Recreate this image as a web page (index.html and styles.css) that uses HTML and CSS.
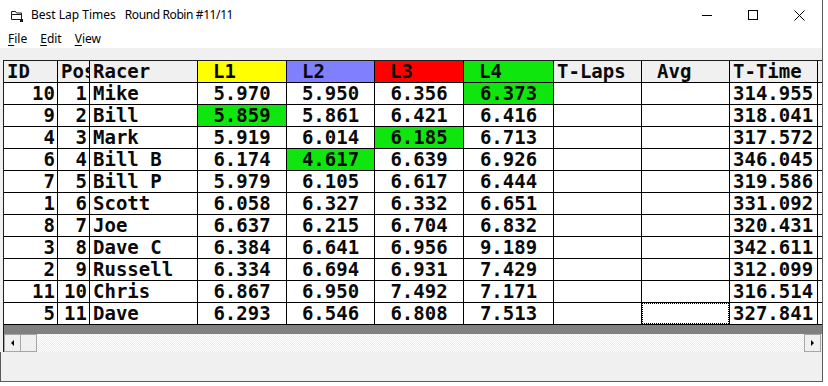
FILE: index.html
```html
<!DOCTYPE html>
<html>
<head>
<meta charset="utf-8">
<link rel="stylesheet" href="styles.css">
</head>
<body>
<div class="window">
  <div class="titlebar">
    <svg class="appicon" width="14" height="12" viewBox="0 0 14 12"><path d="M1.5 1.5h4l1 1.5h5v6.5h-10z" fill="none" stroke="#1a1a1a" stroke-width="1"/><path d="M1.5 4.5h10" stroke="#1a1a1a" stroke-width="1"/><rect x="10" y="9" width="3" height="3" fill="#1a1a1a"/></svg>
    <span class="title">Best Lap Times</span><span class="title sub">Round Robin #11/11</span>
    <div class="controls">
      <div class="ctl"><svg width="10" height="10" viewBox="0 0 10 10"><path d="M0 5.5h10" stroke="#000" stroke-width="1"/></svg></div>
      <div class="ctl"><svg width="10" height="10" viewBox="0 0 10 10"><rect x="0.5" y="0.5" width="9" height="9" fill="none" stroke="#000" stroke-width="1"/></svg></div>
      <div class="ctl"><svg width="11" height="11" viewBox="0 0 11 11"><path d="M0.5 0.5l10 10M10.5 0.5l-10 10" stroke="#000" stroke-width="1"/></svg></div>
    </div>
  </div>
  <div class="menubar">
    <span class="menu"><u>F</u>ile</span>
    <span class="menu"><u>E</u>dit</span>
    <span class="menu"><u>V</u>iew</span>
  </div>
  <div class="client">
    <div class="gridwrap">
      <div class="grid">
        <div class="h">ID</div><div class="h">Pos</div><div class="h">Racer</div><div class="h ind yellow">L1</div><div class="h ind blue">L2</div><div class="h ind red">L3</div><div class="h ind green">L4</div><div class="h">T-Laps</div><div class="h ind">Avg</div><div class="h">T-Time</div><div class="h"></div>

        <div class="r">10</div><div class="r">1</div><div class="l">Mike</div><div class="c">5.970</div><div class="c">5.950</div><div class="c">6.356</div><div class="c green">6.373</div><div class="l"></div><div class="l"></div><div class="l">314.955</div><div class="l"></div>
        <div class="r">9</div><div class="r">2</div><div class="l">Bill</div><div class="c green">5.859</div><div class="c">5.861</div><div class="c">6.421</div><div class="c">6.416</div><div class="l"></div><div class="l"></div><div class="l">318.041</div><div class="l"></div>
        <div class="r">4</div><div class="r">3</div><div class="l">Mark</div><div class="c">5.919</div><div class="c">6.014</div><div class="c green">6.185</div><div class="c">6.713</div><div class="l"></div><div class="l"></div><div class="l">317.572</div><div class="l"></div>
        <div class="r">6</div><div class="r">4</div><div class="l">Bill B</div><div class="c">6.174</div><div class="c green">4.617</div><div class="c">6.639</div><div class="c">6.926</div><div class="l"></div><div class="l"></div><div class="l">346.045</div><div class="l"></div>
        <div class="r">7</div><div class="r">5</div><div class="l">Bill P</div><div class="c">5.979</div><div class="c">6.105</div><div class="c">6.617</div><div class="c">6.444</div><div class="l"></div><div class="l"></div><div class="l">319.586</div><div class="l"></div>
        <div class="r">1</div><div class="r">6</div><div class="l">Scott</div><div class="c">6.058</div><div class="c">6.327</div><div class="c">6.332</div><div class="c">6.651</div><div class="l"></div><div class="l"></div><div class="l">331.092</div><div class="l"></div>
        <div class="r">8</div><div class="r">7</div><div class="l">Joe</div><div class="c">6.637</div><div class="c">6.215</div><div class="c">6.704</div><div class="c">6.832</div><div class="l"></div><div class="l"></div><div class="l">320.431</div><div class="l"></div>
        <div class="r">3</div><div class="r">8</div><div class="l">Dave C</div><div class="c">6.384</div><div class="c">6.641</div><div class="c">6.956</div><div class="c">9.189</div><div class="l"></div><div class="l"></div><div class="l">342.611</div><div class="l"></div>
        <div class="r">2</div><div class="r">9</div><div class="l">Russell</div><div class="c">6.334</div><div class="c">6.694</div><div class="c">6.931</div><div class="c">7.429</div><div class="l"></div><div class="l"></div><div class="l">312.099</div><div class="l"></div>
        <div class="r">11</div><div class="r">10</div><div class="l">Chris</div><div class="c">6.867</div><div class="c">6.950</div><div class="c">7.492</div><div class="c">7.171</div><div class="l"></div><div class="l"></div><div class="l">316.514</div><div class="l"></div>
        <div class="r">5</div><div class="r">11</div><div class="l">Dave</div><div class="c">6.293</div><div class="c">6.546</div><div class="c">6.808</div><div class="c">7.513</div><div class="l"></div><div class="l focus"></div><div class="l">327.841</div><div class="l"></div>
      </div>
      <div class="bkg"></div>
      <div class="hscroll">
        <div class="sbtn"><span class="arr left"></span></div>
        <div class="thumb"></div>
        <div class="track"></div>
        <div class="sbtn"><span class="arr right"></span></div>
      </div>
    </div>
    <div class="rest"></div>
  </div>
</div>
</body>
</html>
```

FILE: styles.css
```css
html, body {
  margin: 0;
  padding: 0;
  background: #ffffff;
}

.window {
  width: 822px;
  height: 381px;
  border-right: 1px solid #5a5a5a;
  border-bottom: 1px solid #5a5a5a;
  display: flex;
  flex-direction: column;
  background: #ffffff;
  font-family: "Noto Sans", "Open Sans", sans-serif;
  font-size: 12px;
  color: #000;
}

.titlebar {
  height: 30px;
  flex: none;
  display: flex;
  align-items: center;
  background: #fff;
}

.appicon {
  margin-left: 10px;
  margin-right: 7px;
  margin-top: 1px;
}

.title {
  white-space: nowrap;
  line-height: 30px;
}

.title.sub {
  margin-left: 9px;
  letter-spacing: -0.4px;
}

.controls {
  margin-left: auto;
  display: flex;
  height: 30px;
}

.ctl {
  width: 46px;
  height: 30px;
  display: flex;
  align-items: center;
  justify-content: center;
}

.menubar {
  height: 18px;
  flex: none;
  display: flex;
  align-items: center;
  padding-left: 8px;
  gap: 13px;
  background: #fff;
}

.menu {
  line-height: 18px;
}

.menu u {
  text-underline-offset: 2px;
}

.client {
  flex: 1;
  background: #f0f0f0;
  padding: 12px 0 0 3px;
  display: flex;
  flex-direction: column;
}

.gridwrap {
  width: 818px;
  border-top: 1px solid #1e1e1e;
  border-left: 1px solid #1e1e1e;
  overflow: hidden;
  flex: none;
}

.grid {
  display: grid;
  grid-template-columns: 53px 31px 107px 88px 87px 88px 89px 87px 87px 87px 88px;
  grid-auto-rows: 21px;
  gap: 1px;
  padding-bottom: 1px;
  background: #000;
  font-family: "DejaVu Sans Mono", "Liberation Mono", monospace;
  font-weight: bold;
  font-size: 19px;
  line-height: 21px;
  color: #0a0a0a;
}

.grid > div {
  background: #fff;
  white-space: nowrap;
  overflow: hidden;
}

.grid > .h {
  background: #f0f0f0;
  padding-left: 3px;
}

.grid > .h.ind {
  padding-left: 15px;
}

.grid > .r {
  text-align: right;
  padding-right: 2px;
}

.grid > .l {
  padding-left: 3px;
}

.grid > .c {
  text-align: center;
}

.grid > .yellow { background: #ffff00; }
.grid > .blue { background: #8080ff; }
.grid > .red { background: #ff0000; }
.grid > .green { background: #0ee60e; }

.grid > .focus {
  outline: 1px dotted #000;
  outline-offset: -1px;
}

.bkg {
  height: 9px;
  background: #808080;
}

.hscroll {
  height: 18px;
  display: flex;
  background: #f0f0f0;
}

.sbtn {
  width: 15px;
  height: 16px;
  border: 1px solid #a6a6a6;
  background: #f0f0f0;
  display: flex;
  align-items: center;
  justify-content: center;
  flex: none;
}

.sbtn:last-child {
  margin-right: 1px;
}

.thumb {
  width: 15px;
  height: 16px;
  border: 1px solid #a6a6a6;
  border-left: none;
  background: #f0f0f0;
  flex: none;
}

.track {
  flex: 1;
  background: repeating-conic-gradient(#ffffff 0 25%, #ececec 0 50%) 0 0 / 2px 2px;
}

.arr {
  width: 0;
  height: 0;
  border-top: 3px solid transparent;
  border-bottom: 3px solid transparent;
}

.arr.left {
  border-right: 3px solid #000;
}

.arr.right {
  border-left: 3px solid #000;
}

.rest {
  flex: 1;
  margin-left: -3px;
  border-left: 1px solid #5a5a5a;
}
```
